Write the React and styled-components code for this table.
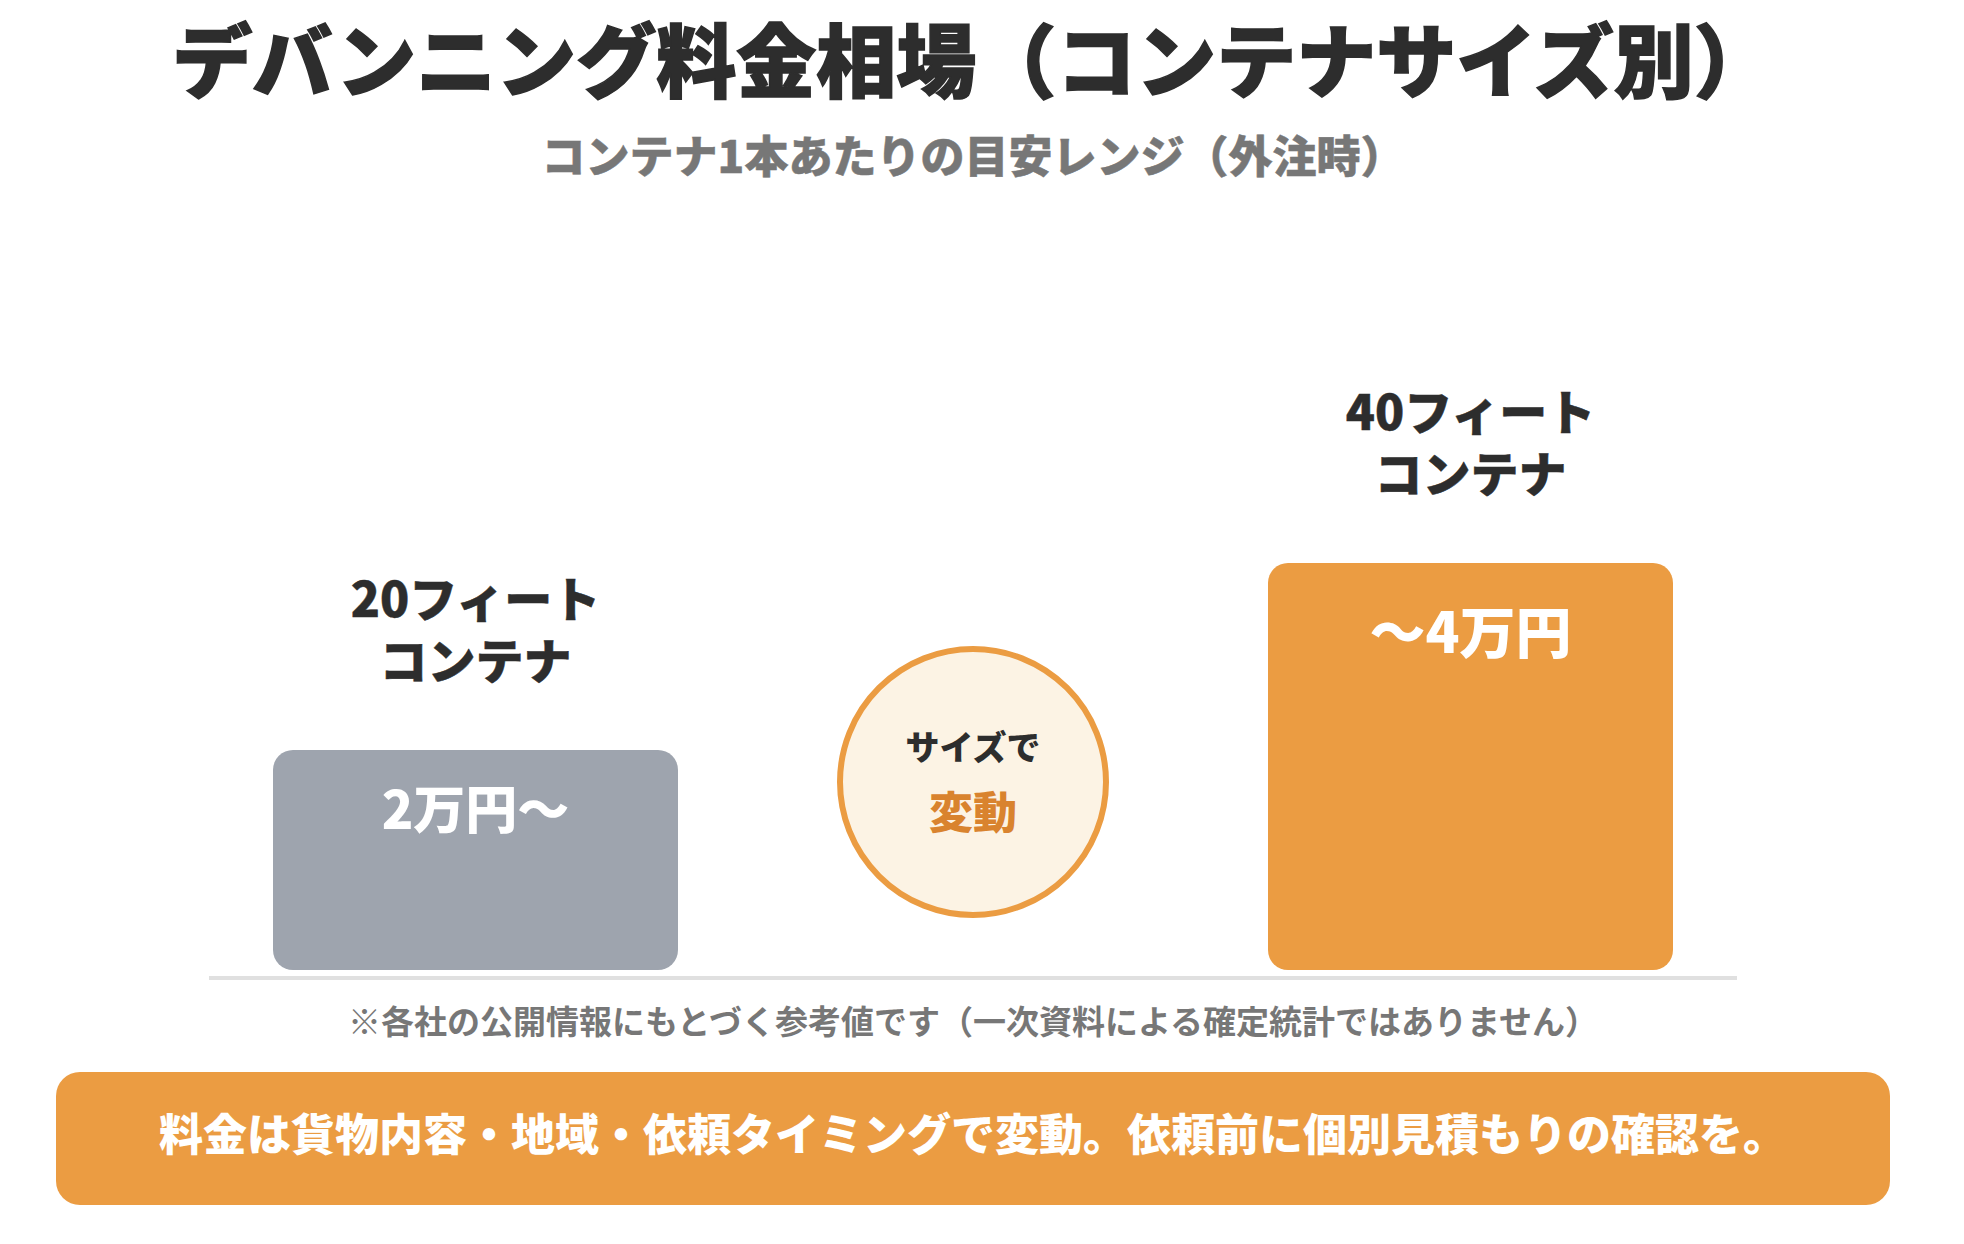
import { createGlobalStyle, styled } from "styled-components";

const GlobalStyle = createGlobalStyle`
  html, body {
    margin: 0;
    padding: 0;
    background: #ffffff;
  }
  body {
    font-family: "Noto Sans CJK JP", "Noto Sans", sans-serif;
    color: #2d2d2d;
  }
`;

const Page = styled.main`
  width: 1946px;
  display: flex;
  flex-direction: column;
  align-items: center;
  padding-top: 8px;
`;

const Title = styled.h1`
  margin: 0;
  font-size: 80px;
  font-weight: 900;
  line-height: 1.2;
  color: #2d2d2d;
  -webkit-text-stroke: 1.5px #2d2d2d;
  white-space: nowrap;
`;

const Subtitle = styled.p`
  margin: 24px 0 0;
  font-size: 44px;
  font-weight: 900;
  line-height: 1.2;
  color: #777777;
  -webkit-text-stroke: 0.5px #777777;
  white-space: nowrap;
`;

const Chart = styled.section`
  box-sizing: border-box;
  width: 1528px;
  height: 799px;
  display: flex;
  align-items: flex-end;
  gap: 159px;
  padding: 0 64px 6px;
  border-bottom: 4px solid #e0e0e0;
`;

const Column = styled.div`
  width: 405px;
  display: flex;
  flex-direction: column;
  align-items: center;
`;

const Label = styled.div`
  margin-bottom: 60px;
  font-size: 48px;
  font-weight: 900;
  line-height: 1.3;
  text-align: center;
  color: #2d2d2d;
  -webkit-text-stroke: 0.5px #2d2d2d;
`;

const Bar = styled.div`
  box-sizing: border-box;
  width: 405px;
  height: ${(p) => p.$height}px;
  padding-top: ${(p) => p.$pad}px;
  border-radius: 20px;
  background: ${(p) => p.$color};
  color: #ffffff;
  font-size: ${(p) => p.$size}px;
  font-weight: 900;
  line-height: 1.2;
  text-align: center;
`;

const Badge = styled.div`
  box-sizing: border-box;
  flex: none;
  width: 272px;
  height: 272px;
  margin-bottom: 52px;
  border: 6px solid #eb9c42;
  border-radius: 50%;
  background: #fcf3e4;
  display: flex;
  flex-direction: column;
  align-items: center;
  justify-content: center;
`;

const BadgeSmall = styled.span`
  font-size: 34px;
  font-weight: 900;
  line-height: 1.3;
  color: #2d2d2d;
`;

const BadgeBig = styled.span`
  margin-top: 14px;
  font-size: 44px;
  font-weight: 900;
  line-height: 1.3;
  color: #d9832e;
`;

const Note = styled.p`
  margin: 17px 0 0;
  font-size: 33px;
  font-weight: 700;
  line-height: 1.4;
  color: #777777;
  white-space: nowrap;
`;

const Banner = styled.div`
  box-sizing: border-box;
  width: 1834px;
  height: 133px;
  margin-top: 29px;
  padding-bottom: 12px;
  border-radius: 24px;
  background: #eb9c42;
  display: flex;
  align-items: center;
  justify-content: center;
  color: #ffffff;
  font-size: 44px;
  font-weight: 900;
  line-height: 1.2;
  white-space: nowrap;
`;

export default function App() {
  return (
    <>
      <GlobalStyle />
      <Page>
        <Title>デバンニング料金相場（コンテナサイズ別）</Title>
        <Subtitle>コンテナ1本あたりの目安レンジ（外注時）</Subtitle>

        <Chart>
          <Column>
            <Label>
              20フィート
              <br />
              コンテナ
            </Label>
            <Bar $height={220} $pad={26} $size={52} $color="#9ea4ae">
              2万円〜
            </Bar>
          </Column>

          <Badge>
            <BadgeSmall>サイズで</BadgeSmall>
            <BadgeBig>変動</BadgeBig>
          </Badge>

          <Column>
            <Label>
              40フィート
              <br />
              コンテナ
            </Label>
            <Bar $height={407} $pad={32} $size={56} $color="#eb9c42">
              〜4万円
            </Bar>
          </Column>
        </Chart>

        <Note>※各社の公開情報にもとづく参考値です（一次資料による確定統計ではありません）</Note>
        <Banner>料金は貨物内容・地域・依頼タイミングで変動。依頼前に個別見積もりの確認を。</Banner>
      </Page>
    </>
  );
}
